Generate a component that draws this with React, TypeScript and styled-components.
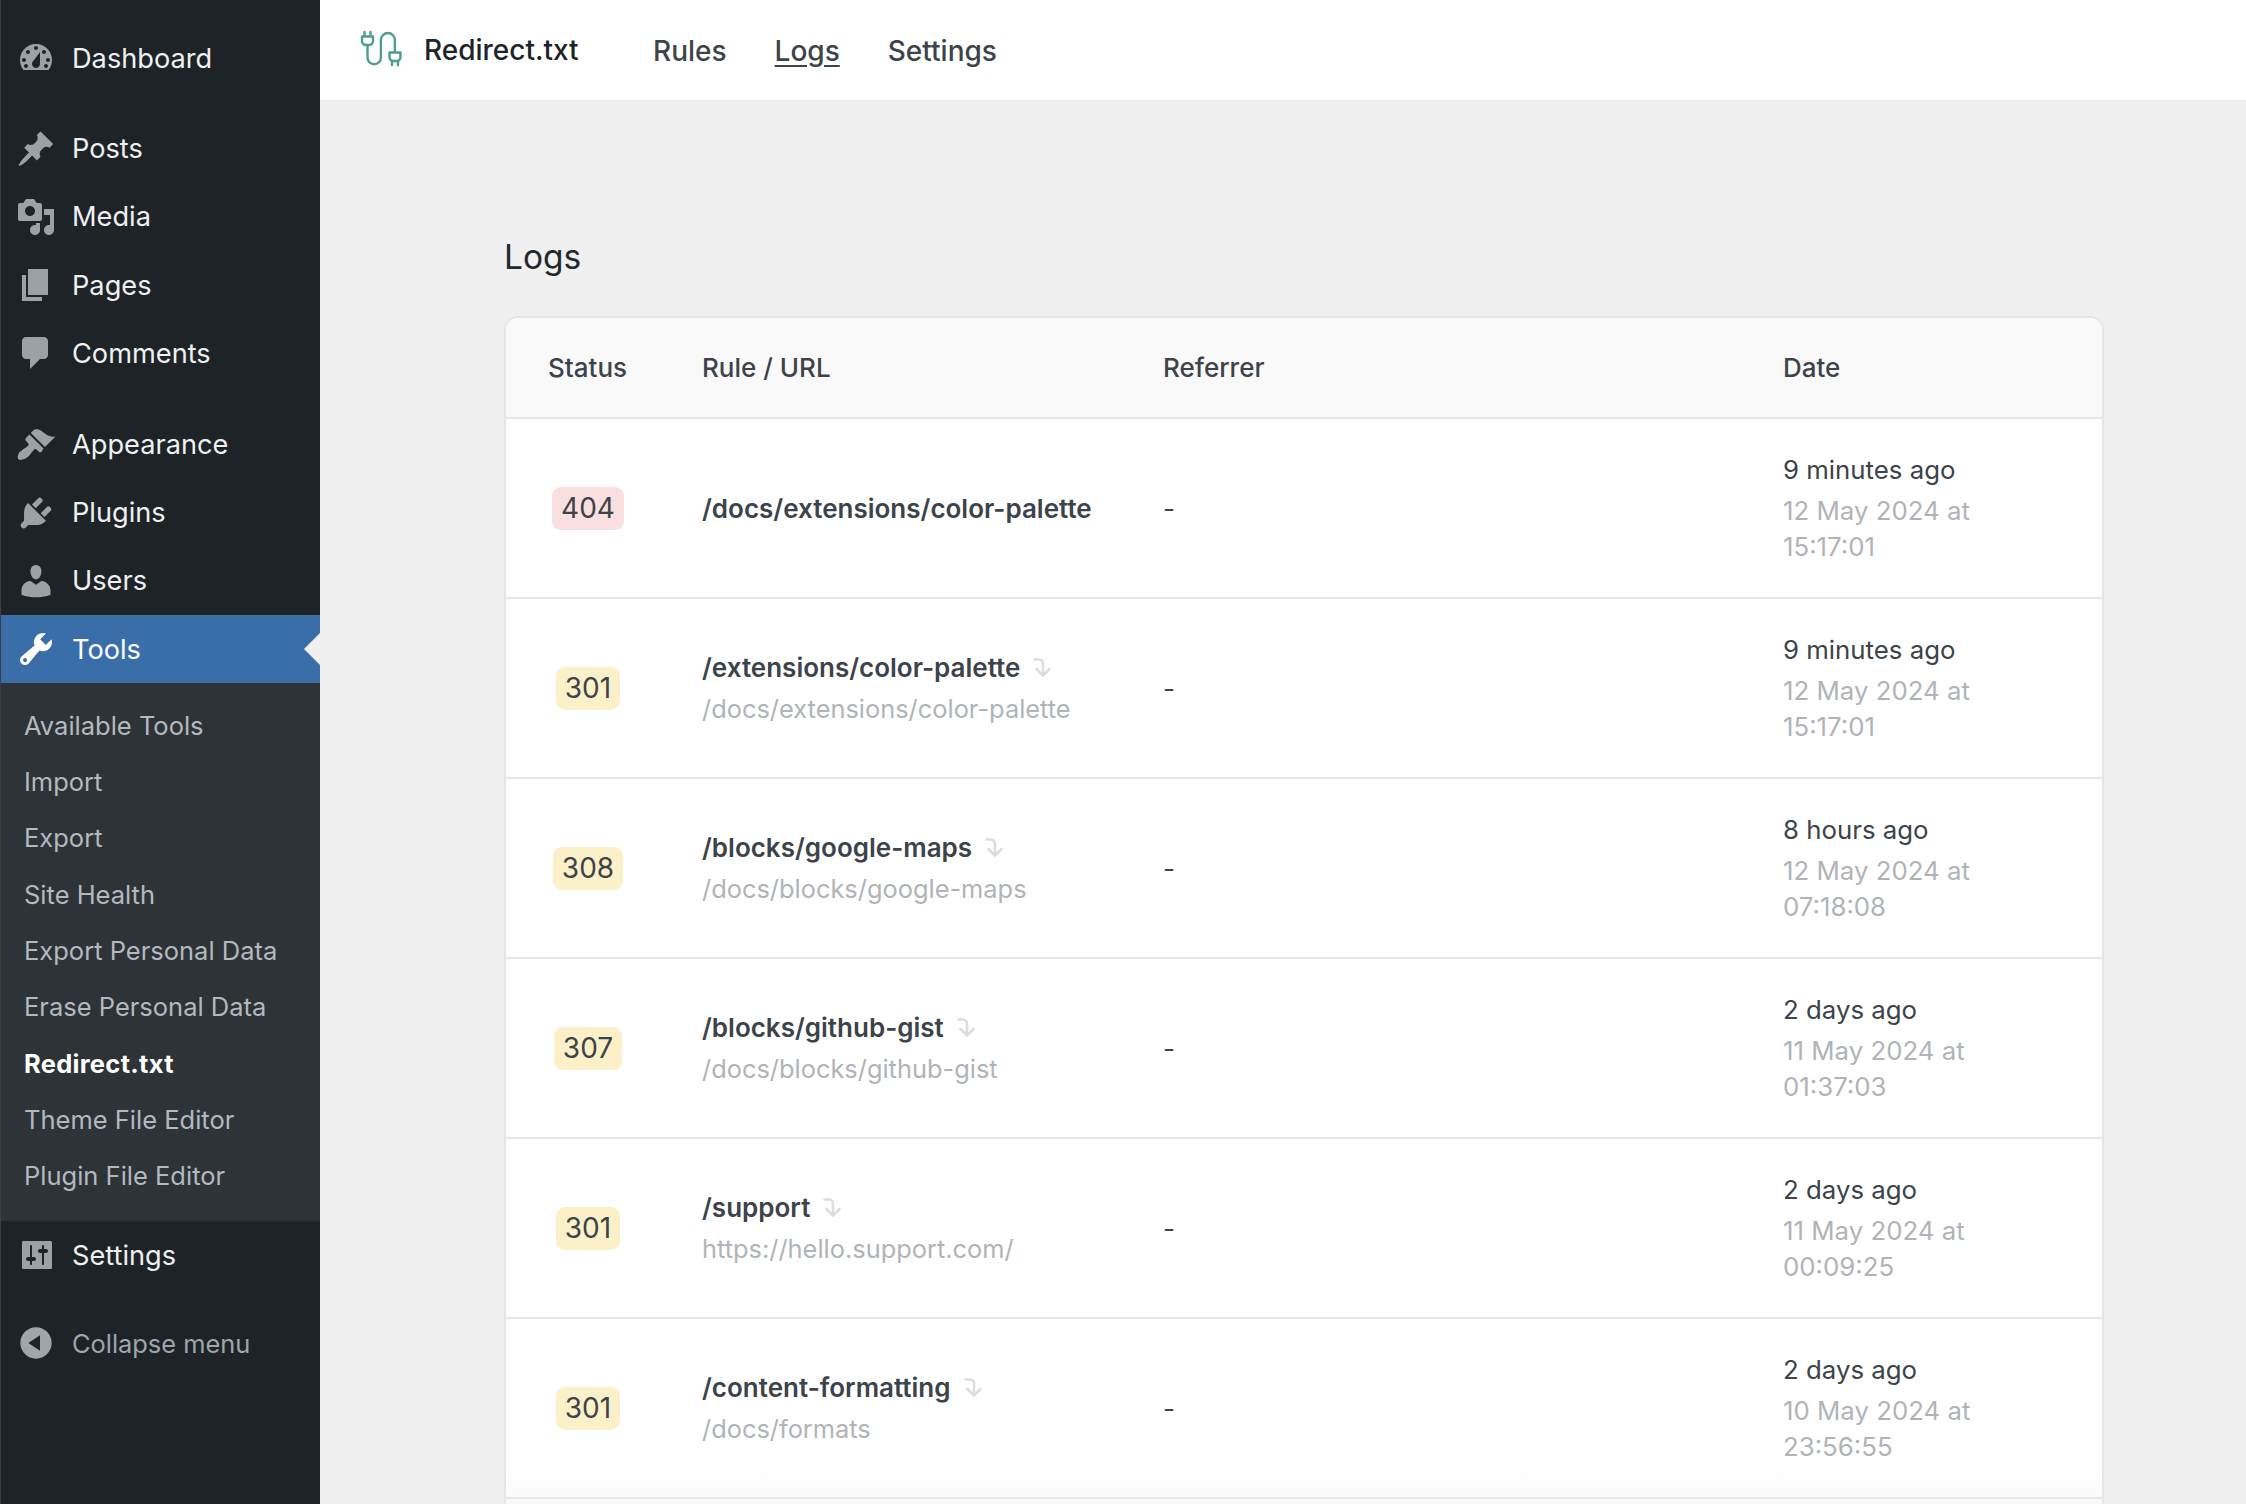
import React from "react";
import styled, { createGlobalStyle } from "styled-components";

const Global = createGlobalStyle`
  html, body { margin: 0; padding: 0; background: #f0f0f0; }
  body { font-family: Inter, "Liberation Sans", sans-serif; -webkit-font-smoothing: antialiased; }
  * { box-sizing: border-box; }
`;

const Page = styled.div`
  display: grid;
  grid-template-columns: 320px 1fr;
  width: 2246px;
  height: 1504px;
  overflow: hidden;
`;

const Sidebar = styled.nav`
  background: #1d2327;
  border-left: 1px solid #3a3f44;
  padding-top: 24px;
  display: flex;
  flex-direction: column;
`;

const MenuItem = styled.a<{ $active?: boolean }>`
  position: relative;
  display: flex;
  align-items: center;
  gap: 16px;
  height: 68.2px;
  flex: none;
  padding-left: 15px;
  font-size: 27.2px;
  color: ${(p) => (p.$active ? "#ffffff" : "#f0f0f1")};
  background: ${(p) => (p.$active ? "#3a6ea9" : "transparent")};
  svg { fill: ${(p) => (p.$active ? "#ffffff" : "#9ca1a7")}; flex: none; }
`;

const ActiveNotch = styled.span`
  position: absolute;
  right: 0;
  top: 50%;
  margin-top: -16px;
  border: 16px solid transparent;
  border-right-color: #f0f0f0;
  border-left-width: 0;
`;

const Gap = styled.div<{ $h: number }>`
  height: ${(p) => p.$h}px;
  flex: none;
`;

const SubMenu = styled.div`
  background: #2e3338;
  height: 538px;
  flex: none;
  padding-top: 14px;
  display: flex;
  flex-direction: column;
`;

const SubItem = styled.a<{ $current?: boolean }>`
  display: flex;
  align-items: center;
  height: 56.3px;
  flex: none;
  padding-left: 23px;
  font-size: 25.5px;
  font-weight: ${(p) => (p.$current ? 700 : 400)};
  letter-spacing: ${(p) => (p.$current ? "0.3px" : "0")};
  color: ${(p) => (p.$current ? "#ffffff" : "#b4b9be")};
`;

const Collapse = styled(MenuItem)`
  color: #a0a5aa;
  font-size: 25.4px;
  svg { fill: #a0a5aa; }
`;

const Main = styled.main`
  display: flex;
  flex-direction: column;
  min-width: 0;
`;

const TopBar = styled.header`
  flex: none;
  display: flex;
  align-items: center;
  height: 102px;
  background: #ffffff;
  border-bottom: 2px solid #ebebeb;
  padding-left: 34px;
`;

const Brand = styled.div`
  display: flex;
  align-items: center;
  gap: 16px;
  font-size: 28px;
  font-weight: 500;
  color: #1e2329;
  width: 299px;
`;

const TopNav = styled.div`
  display: flex;
  gap: 48px;
  padding-top: 2px;
`;

const TopLink = styled.a<{ $current?: boolean }>`
  font-size: 28px;
  font-weight: 500;
  color: #3c434a;
  text-decoration: ${(p) => (p.$current ? "underline" : "none")};
  text-underline-offset: 4px;
`;

const Content = styled.section`
  padding: 132px 142px 0 184px;
`;

const Title = styled.h1`
  margin: 0 0 36px;
  font-size: 33.5px;
  line-height: 46px;
  font-weight: 400;
  color: #23282d;
`;

const Card = styled.div`
  background: #ffffff;
  border: 2px solid #e6e6e6;
  border-radius: 14px 14px 0 0;
  overflow: hidden;
`;

const gridCols = `196px 461px 620px 1fr`;

const HeadRow = styled.div`
  display: grid;
  grid-template-columns: ${gridCols};
  align-items: center;
  height: 101px;
  background: #f9f9f9;
  border-bottom: 2px solid #e6e6e6;
  font-size: 26px;
  font-weight: 500;
  color: #3c434a;
`;

const StatusHead = styled.div`
  padding-left: 42px;
`;

const Row = styled.div<{ $fade?: boolean }>`
  display: grid;
  grid-template-columns: ${gridCols};
  align-items: center;
  height: 180px;
  border-bottom: 2px solid #e6e6e6;
  background: ${(p) => (p.$fade ? "linear-gradient(#ffffff 85%, #fafafa)" : "#ffffff")};
  font-size: 26px;
  color: #3c434a;
`;

const StatusCell = styled.div`
  display: flex;
  justify-content: center;
  width: 164px;
`;

const Badge = styled.span<{ $error?: boolean }>`
  display: inline-block;
  height: 43px;
  line-height: 43px;
  padding: 0 9px;
  border-radius: 9px;
  font-size: 28px;
  color: #3c434a;
  background: ${(p) => (p.$error ? "#f9dfdf" : "#fcf0c9")};
`;

const RuleCell = styled.div`
  display: flex;
  flex-direction: column;
  gap: 6px;
`;

const RuleLine = styled.div`
  display: flex;
  align-items: center;
  gap: 13px;
  font-weight: 600;
  line-height: 35px;
`;

const RuleTarget = styled.div`
  color: #b0b4b8;
  font-size: 25.4px;
  line-height: 35px;
`;

const DateCell = styled.div`
  display: flex;
  flex-direction: column;
  gap: 6px;
  width: 240px;
  font-size: 25.8px;
  line-height: 35.5px;
`;

const DateFull = styled.div`
  color: #b0b4b8;
`;

const Filler = styled.div`
  height: 60px;
  background: #f9f9f9;
`;

const paths: Record<string, string> = {
  dashboard:
    "M3.76 16h12.48c1.1-1.37 1.76-3.11 1.76-5 0-4.42-3.58-8-8-8s-8 3.58-8 8c0 1.89.66 3.63 1.76 5zM10 4c.55 0 1 .45 1 1s-.45 1-1 1-1-.45-1-1 .45-1 1-1zM6 6c.55 0 1 .45 1 1s-.45 1-1 1-1-.45-1-1 .45-1 1-1zm8 0c.55 0 1 .45 1 1s-.45 1-1 1-1-.45-1-1 .45-1 1-1zm-5.37 5.55L12 7v6c0 1.1-.9 2-2 2s-2-.9-2-2c0-.57.24-1.08.63-1.45zM4 10c.55 0 1 .45 1 1s-.45 1-1 1-1-.45-1-1 .45-1 1-1zm12 0c.55 0 1 .45 1 1s-.45 1-1 1-1-.45-1-1 .45-1 1-1zm-11 3c.55 0 1 .45 1 1s-.45 1-1 1-1-.45-1-1 .45-1 1-1zm10 0c.55 0 1 .45 1 1s-.45 1-1 1-1-.45-1-1 .45-1 1-1z",
  post: "M10.44 3.02l1.82-1.82 6.36 6.35-1.83 1.82c-1.05-.68-2.48-.57-3.41.36l-.75.75c-.92.93-1.04 2.35-.35 3.41l-1.83 1.82-2.41-2.41-2.8 2.79c-.42.42-3.38 2.71-3.8 2.29s1.86-3.39 2.28-3.81l2.79-2.79L4.1 9.36l1.83-1.82c1.05.69 2.48.57 3.4-.36l.75-.75c.93-.92 1.05-2.35.36-3.41z",
  media:
    "M13 11V4c0-.55-.45-1-1-1h-1.67L9 1H5L3.67 3H2c-.55 0-1 .45-1 1v7c0 .55.45 1 1 1h10c.55 0 1-.45 1-1zM7 4.5c1.38 0 2.5 1.12 2.5 2.5S8.38 9.5 7 9.5 4.5 8.38 4.5 7 5.62 4.5 7 4.5zM14 6h5v10.5c0 1.38-1.12 2.5-2.5 2.5S14 17.88 14 16.5s1.12-2.5 2.5-2.5c.17 0 .34.02.5.05V9h-3V6zm-4 8.05V13h2v3.5c0 1.38-1.12 2.5-2.5 2.5S7 17.88 7 16.5 8.12 14 9.5 14c.17 0 .34.02.5.05z",
  page: "M6 15V2h10v13H6zm-1 1h8v2H3V5h2v11z",
  comments:
    "M5 2h9c1.1 0 2 .9 2 2v7c0 1.1-.9 2-2 2h-2l-5 5v-5H5c-1.1 0-2-.9-2-2V4c0-1.1.9-2 2-2z",
  appearance:
    "M14.48 11.06L7.41 3.99l1.5-1.5c.5-.56 2.3-.47 3.51.32 1.21.8 1.43 1.28 2.91 2.1 1.18.64 2.45 1.26 4.45.85zm-.71.71L6.7 4.7 4.93 6.47c-.39.39-.39 1.02 0 1.41l1.06 1.06c.39.39.39 1.03 0 1.42-.6.6-1.43 1.11-2.21 1.69-.35.26-.7.53-1.01.84C1.43 13.23.28 16.24 1.2 17.1c.92.93 3.87-.2 5.21-1.54.31-.31.58-.66.85-1.02.57-.78 1.08-1.6 1.69-2.21.39-.39 1.02-.39 1.41 0l1.06 1.06c.39.39 1.02.39 1.41 0z",
  plugins:
    "M13.11 4.36L9.87 7.6 8 5.73l3.24-3.24c.35-.34 1.05-.2 1.56.32.52.51.66 1.21.31 1.55zm-8 1.77l.91-1.12 9.01 9.01-1.19.84c-.71.71-2.63 1.16-3.82 1.16H6.14L4.9 17.26c-.59.59-1.54.59-2.12 0-.59-.58-.59-1.53 0-2.12l1.24-1.24v-3.88c0-1.13.4-3.19 1.09-3.89zm7.26 3.97l3.24-3.24c.34-.35 1.04-.21 1.55.31.52.51.66 1.21.31 1.55l-3.24 3.25z",
  users:
    "M10 9.25c-2.27 0-2.73-3.44-2.73-3.44C7 4.02 7.82 2 9.97 2c2.16 0 2.98 2.02 2.71 3.81 0 0-.41 3.44-2.68 3.44zm0 2.57L12.72 10c2.39 0 4.52 2.33 4.52 4.53v2.49s-3.65 1.13-7.24 1.13c-3.65 0-7.24-1.13-7.24-1.13v-2.49c0-2.25 1.94-4.48 4.47-4.48z",
  tools:
    "M16.68 9.77c-1.34 1.34-3.3 1.67-4.95.99l-5.41 6.52c-.99.99-2.59.99-3.58 0s-.99-2.59 0-3.57l6.52-5.42c-.68-1.65-.35-3.61.99-4.95 1.28-1.28 3.12-1.62 4.72-1.06l-2.89 2.89 2.82 2.82 2.86-2.87c.53 1.58.18 3.39-1.08 4.65zM3.81 16.21c.4.39 1.04.39 1.43 0 .4-.4.4-1.04 0-1.43-.39-.4-1.03-.4-1.43 0-.39.39-.39 1.03 0 1.43z",
  settings:
    "M18 16.2V3.8c0-.5-.3-.8-.8-.8H3.8c-.5 0-.8.3-.8.8v12.4c0 .5.3.8.8.8h13.4c.5 0 .8-.3.8-.8zM8 11h1c.55 0 1 .45 1 1s-.45 1-1 1H8v1.5c0 .28-.22.5-.5.5s-.5-.22-.5-.5V13H6c-.55 0-1-.45-1-1s.45-1 1-1h1V5.5c0-.28.22-.5.5-.5s.5.22.5.5V11zm5-2h-1c-.55 0-1-.45-1-1s.45-1 1-1h1V5.5c0-.28.22-.5.5-.5s.5.22.5.5V7h1c.55 0 1 .45 1 1s-.45 1-1 1h-1v5.5c0 .28-.22.5-.5.5s-.5-.22-.5-.5V9z",
  collapse:
    "M10 2.16c4.33 0 7.84 3.51 7.84 7.84s-3.51 7.84-7.84 7.84S2.16 14.33 2.16 10 5.71 2.16 10 2.16zm2 11.72V6.12L6.18 9.97z",
};

const Dashicon = ({ name }: { name: string }) => (
  <svg width="40" height="40" viewBox="0 0 20 20" aria-hidden="true">
    <path d={paths[name]} />
  </svg>
);

const Logo = () => (
  <svg width="54" height="50" viewBox="0 0 54 50" fill="none" stroke="#4f9d8f" strokeWidth="2.4" strokeLinecap="round" strokeLinejoin="round" aria-hidden="true">
    <path d="M10.5 7v4M16.5 7v4" />
    <path d="M8 11.5h11v4.5a4 4 0 0 1-4 4h-3a4 4 0 0 1-4-4z" />
    <path d="M13.5 20v12.5a6.7 6.7 0 0 0 13.4 0V15a7 7 0 0 1 14 0v12" />
    <path d="M35.5 27.5h11V32a4 4 0 0 1-4 4h-3a4 4 0 0 1-4-4z" />
    <path d="M38 36v4M44 36v4" />
  </svg>
);

const RedirectArrow = () => (
  <svg width="18" height="21" viewBox="0 0 18 21" fill="none" stroke="#dddddd" strokeWidth="2.6" strokeLinecap="round" strokeLinejoin="round" aria-hidden="true">
    <path d="M1.5 2.5h4.5a4 4 0 0 1 4 4v11.5" />
    <path d="M3.5 12l6.5 6.5 6.5-6.5" />
  </svg>
);

const logs = [
  { code: "404", url: "/docs/extensions/color-palette", rel: "9 minutes ago", date: "12 May 2024 at 15:17:01" },
  { code: "301", url: "/extensions/color-palette", to: "/docs/extensions/color-palette", rel: "9 minutes ago", date: "12 May 2024 at 15:17:01" },
  { code: "308", url: "/blocks/google-maps", to: "/docs/blocks/google-maps", rel: "8 hours ago", date: "12 May 2024 at 07:18:08" },
  { code: "307", url: "/blocks/github-gist", to: "/docs/blocks/github-gist", rel: "2 days ago", date: "11 May 2024 at 01:37:03" },
  { code: "301", url: "/support", to: "https://hello.support.com/", rel: "2 days ago", date: "11 May 2024 at 00:09:25" },
  { code: "301", url: "/content-formatting", to: "/docs/formats", rel: "2 days ago", date: "10 May 2024 at 23:56:55" },
];

const subItems = [
  "Available Tools",
  "Import",
  "Export",
  "Site Health",
  "Export Personal Data",
  "Erase Personal Data",
  "Redirect.txt",
  "Theme File Editor",
  "Plugin File Editor",
];

export default function App() {
  return (
    <Page>
      <Global />
      <Sidebar>
        <MenuItem><Dashicon name="dashboard" />Dashboard</MenuItem>
        <Gap $h={22.5} />
        <MenuItem><Dashicon name="post" />Posts</MenuItem>
        <MenuItem><Dashicon name="media" />Media</MenuItem>
        <MenuItem><Dashicon name="page" />Pages</MenuItem>
        <MenuItem><Dashicon name="comments" />Comments</MenuItem>
        <Gap $h={23} />
        <MenuItem><Dashicon name="appearance" />Appearance</MenuItem>
        <MenuItem><Dashicon name="plugins" />Plugins</MenuItem>
        <MenuItem><Dashicon name="users" />Users</MenuItem>
        <MenuItem $active><Dashicon name="tools" />Tools<ActiveNotch /></MenuItem>
        <SubMenu>
          {subItems.map((s) => (
            <SubItem key={s} $current={s === "Redirect.txt"}>{s}</SubItem>
          ))}
        </SubMenu>
        <MenuItem><Dashicon name="settings" />Settings</MenuItem>
        <Gap $h={20} />
        <Collapse><Dashicon name="collapse" />Collapse menu</Collapse>
      </Sidebar>
      <Main>
        <TopBar>
          <Brand><Logo />Redirect.txt</Brand>
          <TopNav>
            <TopLink>Rules</TopLink>
            <TopLink $current>Logs</TopLink>
            <TopLink>Settings</TopLink>
          </TopNav>
        </TopBar>
        <Content>
          <Title>Logs</Title>
          <Card>
            <HeadRow>
              <StatusHead>Status</StatusHead>
              <div>Rule / URL</div>
              <div>Referrer</div>
              <div>Date</div>
            </HeadRow>
            {logs.map((l, i) => (
              <Row key={i} $fade={i === logs.length - 1}>
                <StatusCell><Badge $error={l.code === "404"}>{l.code}</Badge></StatusCell>
                <RuleCell>
                  <RuleLine>{l.url}{l.to && <RedirectArrow />}</RuleLine>
                  {l.to && <RuleTarget>{l.to}</RuleTarget>}
                </RuleCell>
                <div>-</div>
                <DateCell>
                  <div>{l.rel}</div>
                  <DateFull>{l.date}</DateFull>
                </DateCell>
              </Row>
            ))}
            <Filler />
          </Card>
        </Content>
      </Main>
    </Page>
  );
}
